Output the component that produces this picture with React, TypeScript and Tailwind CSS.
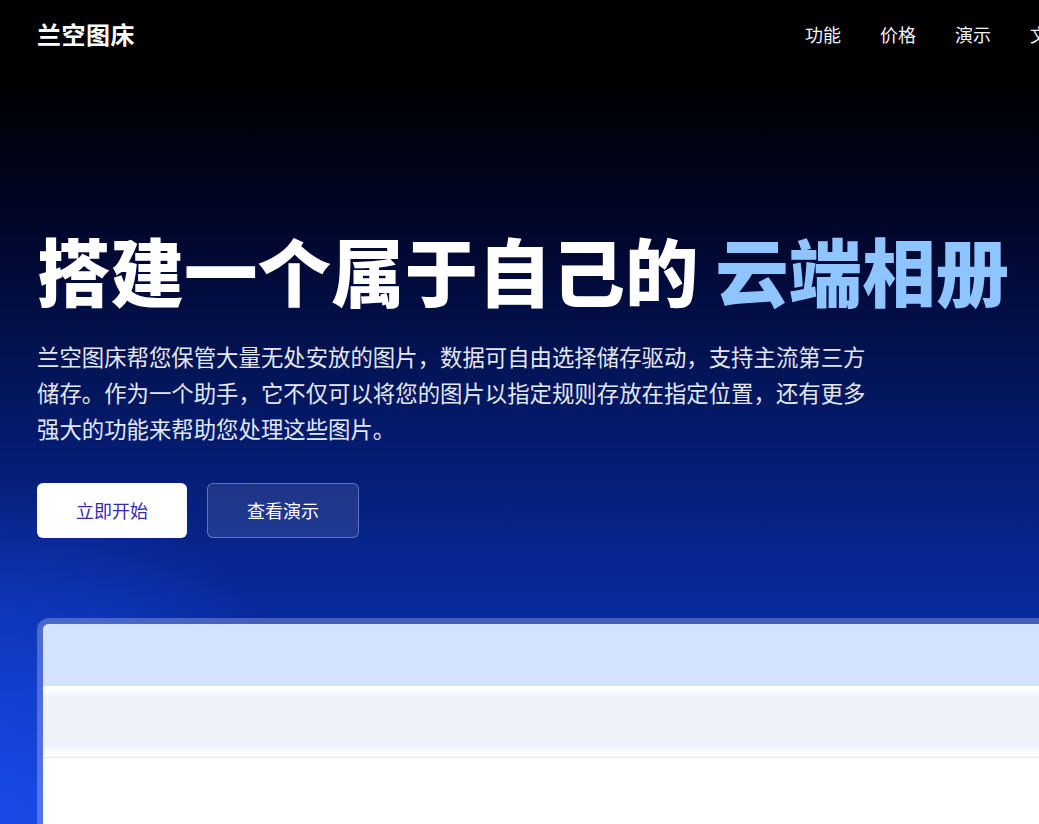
import React from "react";

const cjk = { fontFamily: '"Noto Sans CJK SC", "Noto Sans", sans-serif' };

export default function App() {
  return (
    <div
      className="relative h-[824px] w-full overflow-hidden bg-[radial-gradient(circle_at_0%_100%,rgba(26,76,236,0.95)_0,rgba(26,76,236,0)_340px),linear-gradient(to_bottom,#000000_0px,#000000_80px,#01072e_240px,#041c70_450px,#08299a_600px,#0b31b4_824px)] text-white"
      style={cjk}
    >
      <header className="flex h-[67px] w-[1066px] items-center justify-between pl-[37px]">
        <div className="text-[24px] font-bold leading-none tracking-[0.5px]">兰空图床</div>
        <nav className="flex items-center gap-[39px] text-[18px] leading-none text-gray-100">
          <a>功能</a>
          <a>价格</a>
          <a>演示</a>
          <a>文档</a>
        </nav>
      </header>

      <main className="pl-[37px]">
        <h1 className="mt-[165px] whitespace-nowrap text-[73.5px] font-black leading-[74px]">
          搭建一个属于自己的 <span className="text-blue-300">云端相册</span>
        </h1>
        <p className="mt-[32px] w-[840px] text-[22.4px] leading-[36px] text-slate-200">
          兰空图床帮您保管大量无处安放的图片，数据可自由选择储存驱动，支持主流第三方储存。作为一个助手，它不仅可以将您的图片以指定规则存放在指定位置，还有更多强大的功能来帮助您处理这些图片。
        </p>
        <div className="mt-[37px] flex gap-5">
          <button className="flex h-[55px] w-[150px] items-center justify-center rounded-md bg-white text-[18px] text-indigo-800">
            立即开始
          </button>
          <button className="flex h-[55px] w-[152px] items-center justify-center rounded-md border border-white/30 bg-white/10 text-[18px] text-white">
            查看演示
          </button>
        </div>

        <div className="mt-[80px] w-[1200px] rounded-xl bg-white/25 p-[6px]">
          <div className="overflow-hidden rounded-md bg-white">
            <div className="h-[62px] bg-[#d3e3fd]" />
            <div className="h-[9px] bg-gradient-to-b from-white to-[#f7f8fd]" />
            <div className="h-[53px] bg-[#eff2fb]" />
            <div className="h-[10px] border-b border-gray-200 bg-gradient-to-b from-[#f6f7fc] to-white" />
            <div className="h-[400px] bg-white" />
          </div>
        </div>
      </main>
    </div>
  );
}
